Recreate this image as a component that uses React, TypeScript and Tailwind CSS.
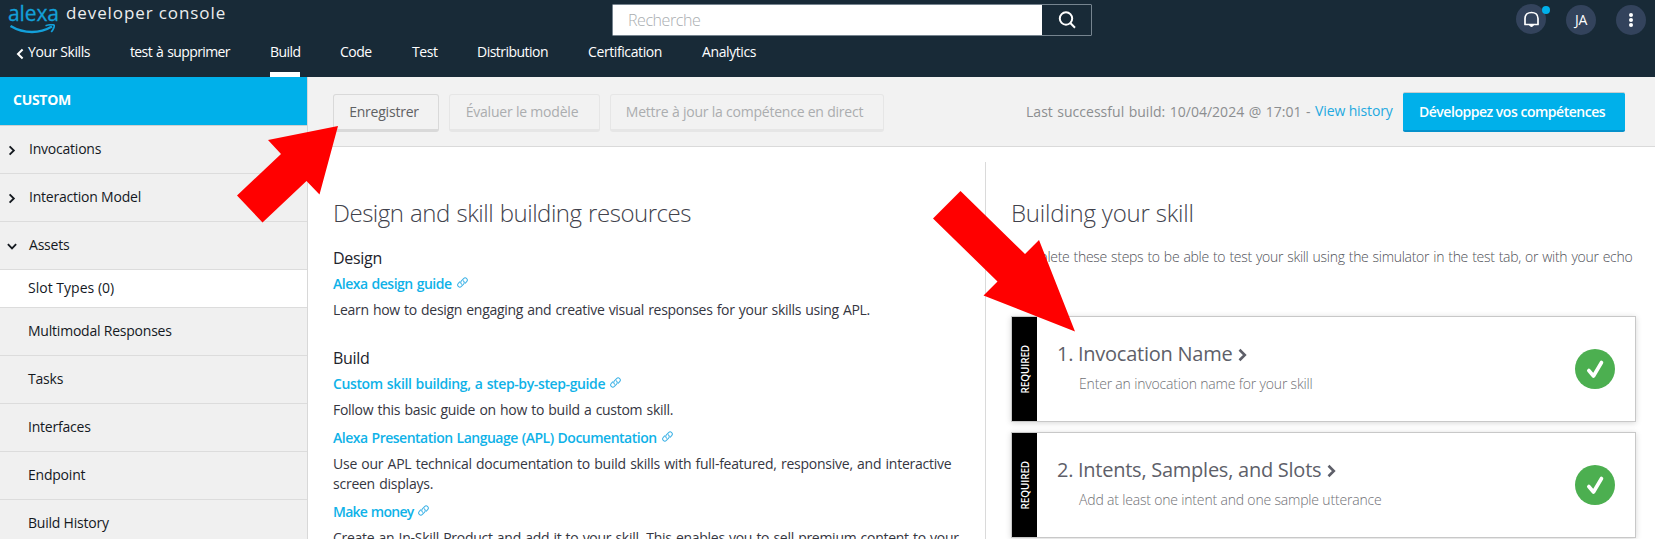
import type { ReactNode } from 'react';

const navItems = [
  { label: 'test à supprimer', className: 'ml-10 w-[100px] tracking-[-0.62px] [word-spacing:1px]' },
  { label: 'Build', className: 'ml-10 w-[30px] tracking-[-0.55px]', active: true },
  { label: 'Code', className: 'ml-10 w-[32px] tracking-[-0.5px]' },
  { label: 'Test', className: 'ml-10 w-[25px] tracking-[-0.45px]' },
  { label: 'Distribution', className: 'ml-10 w-[71px] tracking-[-0.52px]' },
  { label: 'Certification', className: 'ml-10 w-[75px] tracking-[-0.4px]' },
  { label: 'Analytics', className: 'ml-[39px] w-[56px] tracking-[-0.4px]' },
];

const sidebarItems = ['Multimodal Responses', 'Tasks', 'Interfaces', 'Endpoint', 'Build History'];

function Chevron({ className }: { className: string }) {
  return (
    <svg viewBox="0 0 8 12" className={className} fill="none" stroke="currentColor" strokeWidth="2">
      <path d="M1.4 1.5 6 6l-4.6 4.5" />
    </svg>
  );
}

function LinkIcon() {
  return (
    <svg viewBox="0 0 24 24" className="mb-[3px] size-[11px] shrink-0" fill="none" stroke="#3db2e6" strokeWidth="2.2" strokeLinecap="round">
      <path d="M10 15.5a5 5 0 0 1-.4-6.9l4.8-5.1a4.7 4.7 0 0 1 6.7 6.6l-3 3.2" />
      <path d="M14 8.5a5 5 0 0 1 .4 6.9l-4.8 5.1a4.7 4.7 0 0 1-6.7-6.6l3-3.2" />
    </svg>
  );
}

function ResourceLink({ children, className }: { children: ReactNode; className: string }) {
  return (
    <a className={`flex items-center gap-[5px] font-semibold whitespace-nowrap text-[#0fb2e8] ${className}`}>
      <span>{children}</span>
      <LinkIcon />
    </a>
  );
}

function Header() {
  return (
    <header className="flex h-[77px] flex-col bg-[#182a37] text-white">
      <div className="flex h-10 shrink-0">
        <div className="flex w-[612px] pl-2">
          <div className="flex w-[50px] flex-col">
            <span className="h-6 text-[21px] leading-[26px] tracking-[-0.1px] text-[#13a0da] [-webkit-text-stroke:0.3px_#13a0da]">alexa</span>
            <svg viewBox="0 0 50 12" className="h-3 w-[50px]" fill="none" stroke="#13a0da">
              <path d="M2.5 2c6 3.6 13 6 21.500 6 7.500 0 14-2 20-5.500" strokeWidth="2.400" />
              <path d="M37.500 1.800c3-1.200 7.500-1.500 8.500-.7.800 1-.8 4.600-2.800 6.900" strokeWidth="1.700" />
            </svg>
          </div>
          <span className="ml-2 text-[17px] leading-[26px] tracking-[0.9px] whitespace-nowrap text-[#eceeef]">developer console</span>
        </div>
        <div className="mt-1 flex h-8 w-[480px] rounded-[1px] border border-[#76848f]">
          <div className="flex w-[429px] items-center bg-white pl-[15px] text-base leading-8 font-light tracking-[-0.43px] text-[#a9adb0]">Recherche</div>
          <button className="flex flex-1 items-center justify-center">
            <svg viewBox="0 0 18 18" className="size-[18px]" fill="none" stroke="white" strokeWidth="2">
              <circle cx="8" cy="7.500" r="6.200" />
              <path d="m12.300 12 4.700 4.700" />
            </svg>
          </button>
        </div>
        <div className="ml-auto flex gap-5 pr-[9px]">
          <div className="relative mt-1 flex size-[30px] items-center justify-center rounded-full bg-[#33435c]">
            <svg viewBox="0 0 16 17" className="size-[17px]" fill="none" stroke="white" strokeWidth="1.700">
              <path d="M1.500 13.500V7.500C1.500 3.500 4.500 1.500 8 1.500s6.500 2 6.500 6v6z" strokeLinejoin="round" />
              <path d="M6 14h4l-2 2z" fill="white" strokeWidth="1" />
            </svg>
            <span className="absolute top-0.5 -right-[4px] size-2 rounded-full bg-[#00b0ea]" />
          </div>
          <div className="mt-[5px] flex size-[30px] items-center justify-center rounded-full bg-[#33435c] text-sm tracking-[-0.3px]">JA</div>
          <div className="mt-[5px] flex size-[30px] flex-col items-center justify-center gap-px rounded-full bg-[#33435c]">
            <span className="size-1 rounded-full bg-white" />
            <span className="size-1 rounded-full bg-white" />
            <span className="size-1 rounded-full bg-white" />
          </div>
        </div>
      </div>
      <nav className="flex flex-1 pl-4 text-sm leading-6 whitespace-nowrap">
        <a className="flex w-[74px] tracking-[-0.4px]">
          <Chevron className="mt-[7.500px] mr-1 h-3 w-2 shrink-0 rotate-180" />
          Your Skills
        </a>
        {navItems.map((item) => (
          <a key={item.label} className={`${item.className} ${item.active ? 'h-[37px] border-b-[5px] border-white' : ''}`}>
            {item.label}
          </a>
        ))}
      </nav>
    </header>
  );
}

function SidebarGroup({ label, open }: { label: string; open?: boolean }) {
  return (
    <div className="flex h-12 shrink-0 items-center border-b border-[#dcdcdc] pl-2">
      <Chevron className={`mt-px mr-[13px] h-[11px] w-2 ${open ? 'rotate-90' : ''}`} />
      <span className="mb-px">{label}</span>
    </div>
  );
}

function Sidebar() {
  return (
    <aside className="flex w-[308px] shrink-0 flex-col border-r border-[#d8d8d8] bg-[#f0f0f0] text-sm tracking-[-0.22px] text-[#14191f]">
      <div className="h-[49px] shrink-0 border-b border-[#d0d0d0] bg-[#00b0ea] pl-[13px] leading-[46px] font-bold tracking-[-0.28px] text-white">CUSTOM</div>
      <SidebarGroup label="Invocations" />
      <SidebarGroup label="Interaction Model" />
      <SidebarGroup label="Assets" open />
      <div className="h-[38px] shrink-0 border-b border-[#dcdcdc] bg-white pl-7 leading-[36px] tracking-[0.02px]">Slot Types (0)</div>
      {sidebarItems.map((item) => (
        <div key={item} className="h-12 shrink-0 border-b border-[#dcdcdc] pl-7 leading-[46px]">
          {item}
        </div>
      ))}
    </aside>
  );
}

function Toolbar() {
  return (
    <div className="flex h-[70px] shrink-0 items-start border-b border-[#dadada] bg-[#f2f2f2] pl-[25px] text-sm leading-[34px] whitespace-nowrap">
      <button className="mt-[17px] h-[38px] w-[106px] rounded-[3px] border border-b-[3px] border-[#d9d9d9] pr-1 leading-[34px] tracking-[-0.22px] text-[#5f6163]">Enregistrer</button>
      <button className="mt-[17px] ml-2.5 h-[38px] w-[151px] rounded-[3px] border border-b-[3px] border-[#e6e6e6] pr-[5px] leading-[34px] tracking-[-0.2px] text-[#abadaf]">Évaluer le modèle</button>
      <button className="mt-[17px] ml-2.5 h-[38px] w-[274px] rounded-[3px] border border-b-[3px] border-[#e6e6e6] pr-[5px] leading-[34px] tracking-[-0.22px] text-[#abadaf]">Mettre à jour la compétence en direct</button>
      <span className="mt-[18px] ml-[142px] w-[289px] tracking-[0.02px] text-[#8c8e90] [word-spacing:0.8px]">Last successful build: 10/04/2024 @ 17:01 -</span>
      <a className="mt-[17px] w-[88px] tracking-[-0.12px] text-[#23a9e0]">View history</a>
      <button className="mt-[15px] h-10 w-[222px] rounded-[2px] border-t border-b-2 border-t-[#c9cdce] border-b-[#0591cb] bg-[#00b0ea] pr-4 pl-4 text-left leading-[36px] font-semibold tracking-[-0.48px] text-white">
        Développez vos compétences
      </button>
    </div>
  );
}

function Resources() {
  return (
    <section className="w-[677px] shrink-0 pt-[50px] pl-[25px] text-sm leading-5 tracking-[-0.3px] whitespace-nowrap text-[#35363f] [word-spacing:0.85px]">
      <h2 className="text-2xl leading-8 font-light tracking-[-0.48px] text-[#41424c]">Design and skill building resources</h2>
      <h3 className="mt-[17px] text-base leading-6 tracking-[-0.3px] text-[#22232b]">Design</h3>
      <ResourceLink className="mt-1 tracking-[-0.5px]">Alexa design guide</ResourceLink>
      <p className="mt-1.5">Learn how to design engaging and creative visual responses for your skills using APL.</p>
      <h3 className="mt-[26px] text-base leading-6 tracking-[-0.3px] text-[#22232b]">Build</h3>
      <ResourceLink className="mt-1 tracking-[-0.38px]">Custom skill building, a step-by-step-guide</ResourceLink>
      <p className="mt-1.5 tracking-[-0.28px]">Follow this basic guide on how to build a custom skill.</p>
      <ResourceLink className="mt-2 tracking-[-0.5px]">Alexa Presentation Language (APL) Documentation</ResourceLink>
      <p className="mt-1.5 tracking-[-0.24px]">
        Use our APL technical documentation to build skills with full-featured, responsive, and interactive
        <br />
        screen displays.
      </p>
      <ResourceLink className="mt-2 tracking-[-0.75px]">Make money</ResourceLink>
      <p className="mt-1.5 tracking-[-0.28px]">Create an In-Skill Product and add it to your skill. This enables you to sell premium content to your</p>
    </section>
  );
}

function StepCard({ number, title, text }: { number: number; title: string; text: string }) {
  return (
    <article className="flex h-[106px] w-[625px] shrink-0 items-center border border-[#c8c8c8] bg-white shadow-[0_1px_6px_rgba(0,0,0,0.16)]">
      <div className="flex h-full w-[25px] shrink-0 items-center justify-center bg-black">
        <span className="rotate-180 text-[10px] leading-3 font-semibold tracking-[-0.15px] text-white [writing-mode:vertical-rl]">REQUIRED</span>
      </div>
      <div className="flex-1 self-start pt-[23px] pl-5 whitespace-nowrap">
        <h3 className="flex text-xl leading-7 tracking-[-0.25px] text-[#5e5f69]">
          <span className="w-[21px]">{number}.</span>
          {title}
          <svg viewBox="0 0 9 14" className="mt-2 ml-1.5 h-3.5 w-[9px]" fill="none" stroke="currentColor" strokeWidth="2.600">
            <path d="M1.500 1.800 6.800 7l-5.300 5.200" />
          </svg>
        </h3>
        <p className="mt-1.5 pl-[22px] text-sm leading-5 font-light tracking-[-0.18px] text-[#6f7075]">{text}</p>
      </div>
      <svg viewBox="0 0 40 40" className="mr-5 size-10 shrink-0">
        <circle cx="20" cy="20" r="20" fill="#4caf50" />
        <path d="m13.800 21.500 4.700 5.500 8-13.500" fill="none" stroke="white" strokeWidth="3.600" strokeLinecap="round" strokeLinejoin="round" />
      </svg>
    </article>
  );
}

function Steps() {
  return (
    <section className="mt-[15px] flex flex-1 flex-col border-l border-[#dadada] pt-[35px] pl-[25px] whitespace-nowrap">
      <h2 className="text-2xl leading-8 font-light tracking-[-0.2px] text-[#41424c]">Building your skill</h2>
      <p className="mt-[17px] text-sm leading-[21px] font-light tracking-[-0.3px] text-[#505158] [word-spacing:0.8px]">
        Complete these steps to be able to test your skill using the simulator in the test tab, or with your echo
      </p>
      <div className="mt-[49px] flex flex-col gap-2.5">
        <StepCard number={1} title="Invocation Name" text="Enter an invocation name for your skill" />
        <StepCard number={2} title="Intents, Samples, and Slots" text="Add at least one intent and one sample utterance" />
      </div>
    </section>
  );
}

export default function App() {
  return (
    <div className="relative flex h-[539px] w-[1655px] flex-col overflow-hidden bg-white font-['Open_Sans','Noto_Sans',sans-serif]">
      <Header />
      <div className="flex min-h-0 flex-1">
        <Sidebar />
        <main className="flex min-w-0 flex-1 flex-col">
          <Toolbar />
          <div className="flex min-h-0 flex-1">
            <Resources />
            <Steps />
          </div>
        </main>
      </div>
      <svg viewBox="0 0 1655 539" className="pointer-events-none absolute inset-0 h-[539px] w-[1655px]" fill="#ff0000">
        <path d="M338 126 268 140 281 154 237 195.500 262.500 222.500 306.500 181 319.500 194.500Z" />
        <path d="M960.500 191 1025 254 1039 240 1075 331.500 983.500 295.500 997.500 281.500 933 218.500Z" />
      </svg>
    </div>
  );
}
